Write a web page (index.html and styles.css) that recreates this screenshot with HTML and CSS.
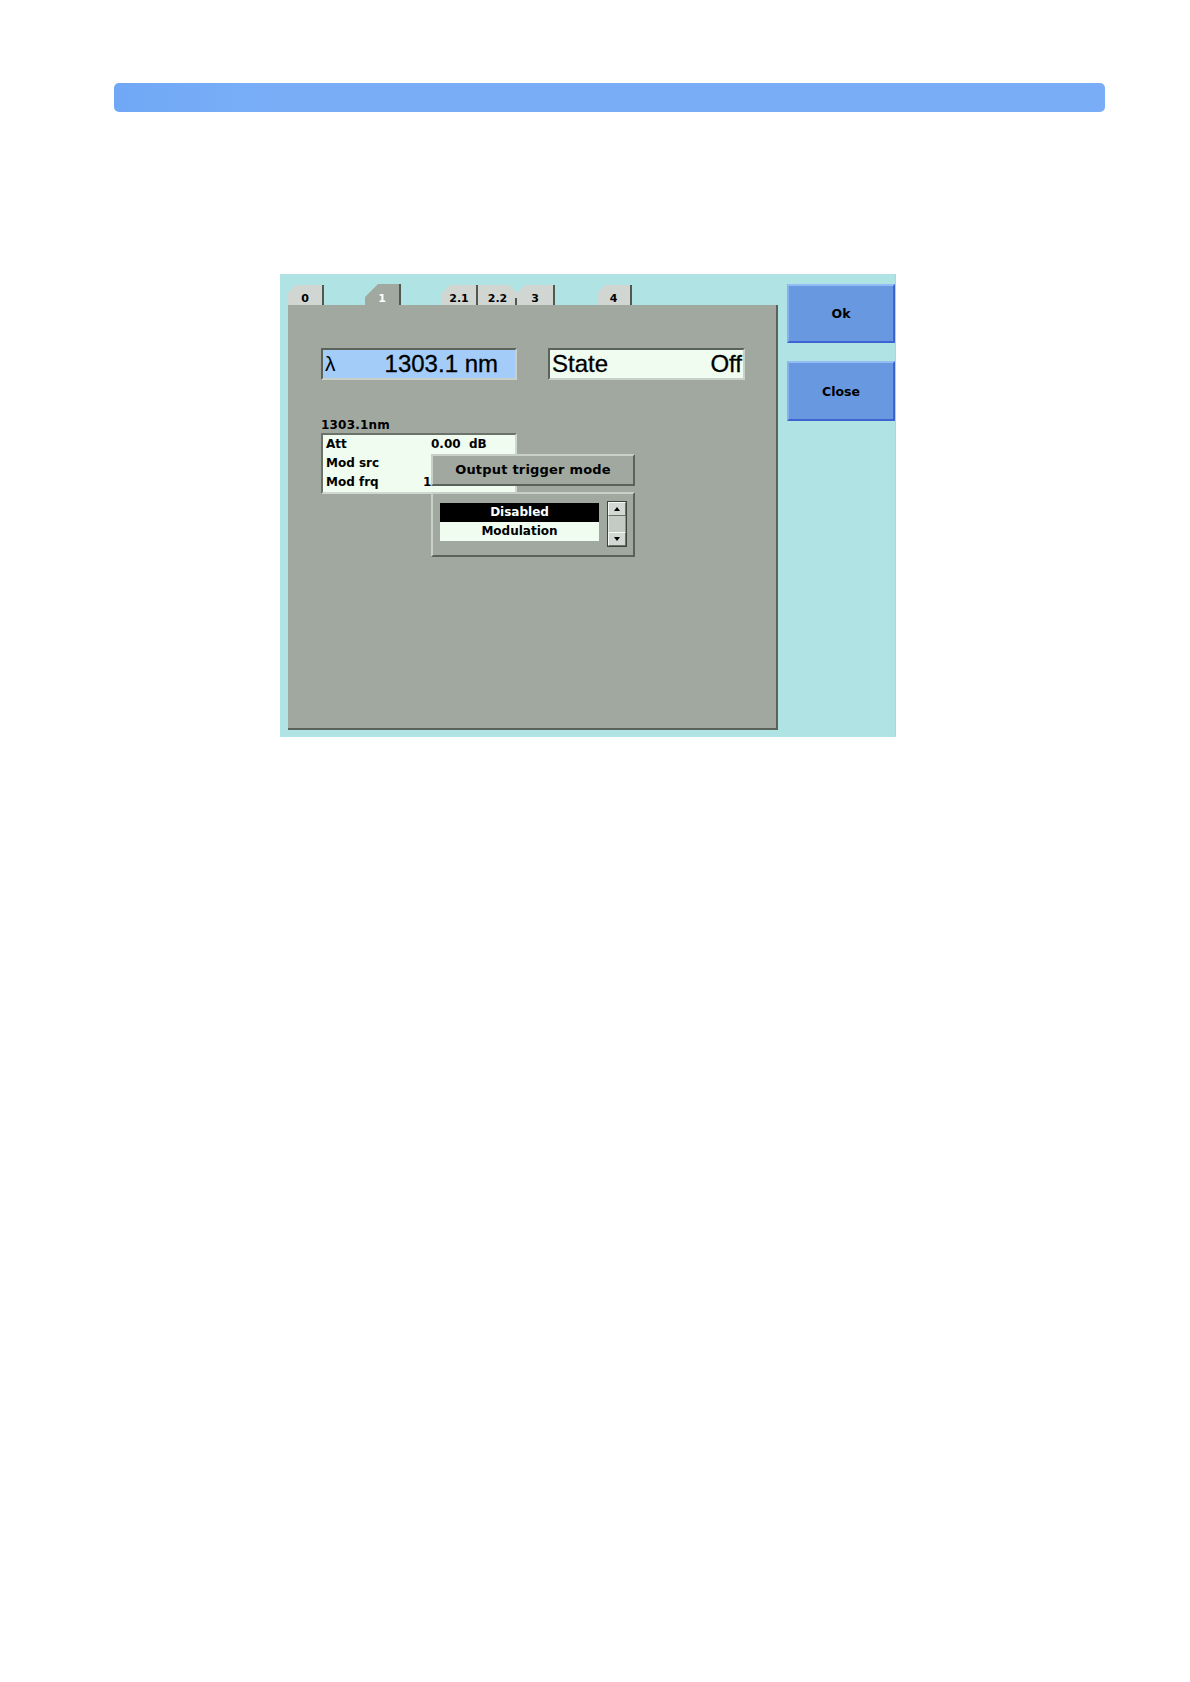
FILE: index.html
```html
<!DOCTYPE html>
<html>
<head>
<meta charset="utf-8">
<link rel="stylesheet" href="styles.css">
</head>
<body>
<div class="topbar"></div>
<div class="dialog">
  <div class="main">
    <div class="tabs">
      <div class="tab t0">0</div>
      <div class="tab t1 active">1</div>
      <div class="tab t21">2.1</div>
      <div class="tab t22">2.2</div>
      <div class="tab t3">3</div>
      <div class="tab t4">4</div>
    </div>
    <div class="panel">
      <div class="readouts">
        <div class="field lambda"><span class="sym">λ</span><span>1303.1 nm</span></div>
        <div class="field state"><span>State</span><span>Off</span></div>
      </div>
      <div class="caption">1303.1nm</div>
      <div class="table">
        <div class="row"><span class="lbl">Att</span><span class="val att">0.00  dB</span></div>
        <div class="row"><span class="lbl">Mod src</span><span class="val"></span></div>
        <div class="row"><span class="lbl">Mod frq</span><span class="val">1.000 kHz</span></div>
      </div>
      <div class="popup">
        <div class="popup-title">Output trigger mode</div>
        <div class="popup-list">
          <div class="list">
            <div class="item sel">Disabled</div>
            <div class="item">Modulation</div>
          </div>
          <div class="scroll">
            <div class="sbtn"><span class="tri up"></span></div>
            <div class="strack"></div>
            <div class="sbtn"><span class="tri down"></span></div>
          </div>
        </div>
      </div>
    </div>
  </div>
  <div class="buttons">
    <div class="btn ok">Ok</div>
    <div class="btn close">Close</div>
  </div>
</div>
</body>
</html>
```
FILE: styles.css
```css
html, body {
  margin: 0;
  padding: 0;
  background: #ffffff;
}
body {
  width: 1190px;
  height: 1682px;
  font-family: "DejaVu Sans", "Liberation Sans", sans-serif;
}
.topbar {
  margin: 83px 0 0 114px;
  width: 991px;
  height: 29px;
  border-radius: 5px;
  background: linear-gradient(90deg, #70a8f6 0%, #79aef7 15%, #79aef7 100%);
}
.dialog {
  margin: 162px 0 0 280px;
  width: 616px;
  height: 463px;
  background: #b0e4e4;
  border-right: 1px solid #c4cccc;
  display: flex;
  box-sizing: border-box;
  padding: 10px 0 0 8px;
}
.main {
  width: 490px;
  display: flex;
  flex-direction: column;
}
.tabs {
  height: 21px;
  display: flex;
  align-items: flex-end;
}
.tab {
  height: 20px;
  box-sizing: border-box;
  padding-top: 7px;
  line-height: 13px;
  font-size: 11px;
  font-weight: bold;
  text-align: center;
  color: #000;
  background: #d2d6d2;
  border-right: 2px solid #505850;
  clip-path: polygon(0 8px, 8px 0, 100% 0, 100% 100%, 0 100%);
}
.tab.active {
  height: 21px;
  padding-top: 8px;
  background: #a0a8a0;
  color: #ffffff;
  clip-path: polygon(0 13px, 13px 0, 100% 0, 100% 100%, 0 100%);
}
.t0 { width: 36px; }
.t1 { width: 36px; margin-left: 41px; }
.t21 { width: 36px; margin-left: 41px; }
.t22 {
  width: 39px;
  border-right: none;
  background: linear-gradient(#d2d6d2, #d2d6d2) no-repeat, linear-gradient(#505850, #505850) no-repeat right bottom / 2px 7px;
  background-color: #d2d6d2;
  clip-path: polygon(0 0, calc(100% - 8px) 0, 100% 8px, 100% 100%, 0 100%);
}
.t22 {
  background: #d2d6d2;
  position: relative;
}
.t22::after {
  content: "";
  position: absolute;
  right: 0;
  bottom: 0;
  width: 2px;
  height: 7px;
  background: #505850;
}
.t3 { width: 38px; }
.t4 { width: 35px; margin-left: 42px; }

.panel {
  position: relative;
  width: 490px;
  height: 425px;
  box-sizing: border-box;
  background: #a0a8a0;
  border-right: 2px solid #5a625a;
  border-bottom: 2px solid #5a625a;
  padding: 43px 0 0 33px;
}
.readouts {
  display: flex;
  gap: 31px;
}
.field {
  height: 32px;
  box-sizing: border-box;
  border-top: 2px solid #5a625a;
  border-left: 2px solid #5a625a;
  border-bottom: 2px solid #c8d0c8;
  border-right: 2px solid #c8d0c8;
  display: flex;
  justify-content: space-between;
  align-items: center;
  font-family: "Liberation Sans", Arial, sans-serif;
  font-size: 24px;
  line-height: 28px;
  color: #000;
  -webkit-text-stroke: 0.3px #000;
}
.lambda {
  width: 196px;
  background: #a4ccf8;
  padding: 0 17px 0 2px;
}
.lambda .sym {
  font-size: 21px;
  -webkit-text-stroke: 0;
}
.state {
  width: 197px;
  background: #f0fcf0;
  padding: 0 1px 0 2px;
}
.caption {
  margin-top: 38px;
  font-size: 12px;
  font-weight: bold;
  line-height: 14px;
  color: #000;
  letter-spacing: 0.2px;
}
.table {
  margin-top: 1px;
  width: 196px;
  height: 61px;
  box-sizing: border-box;
  background: #f0fcf0;
  border-top: 2px solid #6a726a;
  border-left: 2px solid #6a726a;
  border-bottom: 2px solid #d0d8d0;
  border-right: 2px solid #d0d8d0;
  overflow: hidden;
}
.row {
  display: flex;
  height: 19px;
  line-height: 19px;
  font-size: 12px;
  font-weight: bold;
  color: #000;
  white-space: pre;
  padding-left: 3px;
}
.lbl {
  width: 97px;
  flex: none;
}
.val.att {
  padding-left: 8px;
}
.popup {
  position: absolute;
  left: 143px;
  top: 149px;
  width: 204px;
  display: flex;
  flex-direction: column;
  gap: 6px;
}
.popup-title {
  height: 32px;
  box-sizing: border-box;
  background: #a0a8a0;
  border-top: 2px solid #c8d0c8;
  border-left: 2px solid #c8d0c8;
  border-bottom: 2px solid #5a625a;
  border-right: 2px solid #5a625a;
  font-size: 13px;
  font-weight: bold;
  line-height: 28px;
  text-align: center;
  color: #000;
  letter-spacing: 0.2px;
}
.popup-list {
  height: 65px;
  box-sizing: border-box;
  background: #a0a8a0;
  border-top: 2px solid #c8d0c8;
  border-left: 2px solid #c8d0c8;
  border-bottom: 2px solid #5a625a;
  border-right: 2px solid #5a625a;
  padding: 9px 6px 0 7px;
  display: flex;
  align-items: flex-start;
  gap: 8px;
}
.list {
  width: 159px;
  display: flex;
  flex-direction: column;
}
.item {
  height: 19px;
  line-height: 19px;
  font-size: 12px;
  font-weight: bold;
  text-align: center;
  background: #f0fcf0;
  color: #000;
}
.item.sel {
  background: #000;
  color: #fff;
}
.scroll {
  margin-top: -2px;
  width: 20px;
  height: 46px;
  box-sizing: border-box;
  border: 1px solid #3c443c;
  background: #b4bcb4;
  display: flex;
  flex-direction: column;
}
.sbtn {
  height: 14px;
  box-sizing: border-box;
  background: #d4d8d4;
  border-top: 1px solid #f4f8f4;
  border-left: 1px solid #f4f8f4;
  border-bottom: 1px solid #6a726a;
  border-right: 1px solid #6a726a;
  display: flex;
  align-items: center;
  justify-content: center;
}
.strack {
  flex: 1;
  background: #c4cac4;
  border-left: 1px solid #e4e8e4;
  border-right: 1px solid #8a928a;
}
.tri {
  width: 0;
  height: 0;
  border-left: 3px solid transparent;
  border-right: 3px solid transparent;
}
.tri.up { border-bottom: 4px solid #000; }
.tri.down { border-top: 4px solid #000; }

.buttons {
  margin-left: 9px;
  width: 108px;
  display: flex;
  flex-direction: column;
  gap: 18px;
}
.btn {
  box-sizing: border-box;
  background: #6898e0;
  border-top: 2px solid #94bcf6;
  border-left: 2px solid #86b0f0;
  border-bottom: 2px solid #3e64d2;
  border-right: 2px solid #3e64d2;
  display: flex;
  align-items: center;
  justify-content: center;
  font-size: 12.5px;
  font-weight: bold;
  color: #000;
}
.ok { height: 59px; }
.close { height: 60px; }
```
